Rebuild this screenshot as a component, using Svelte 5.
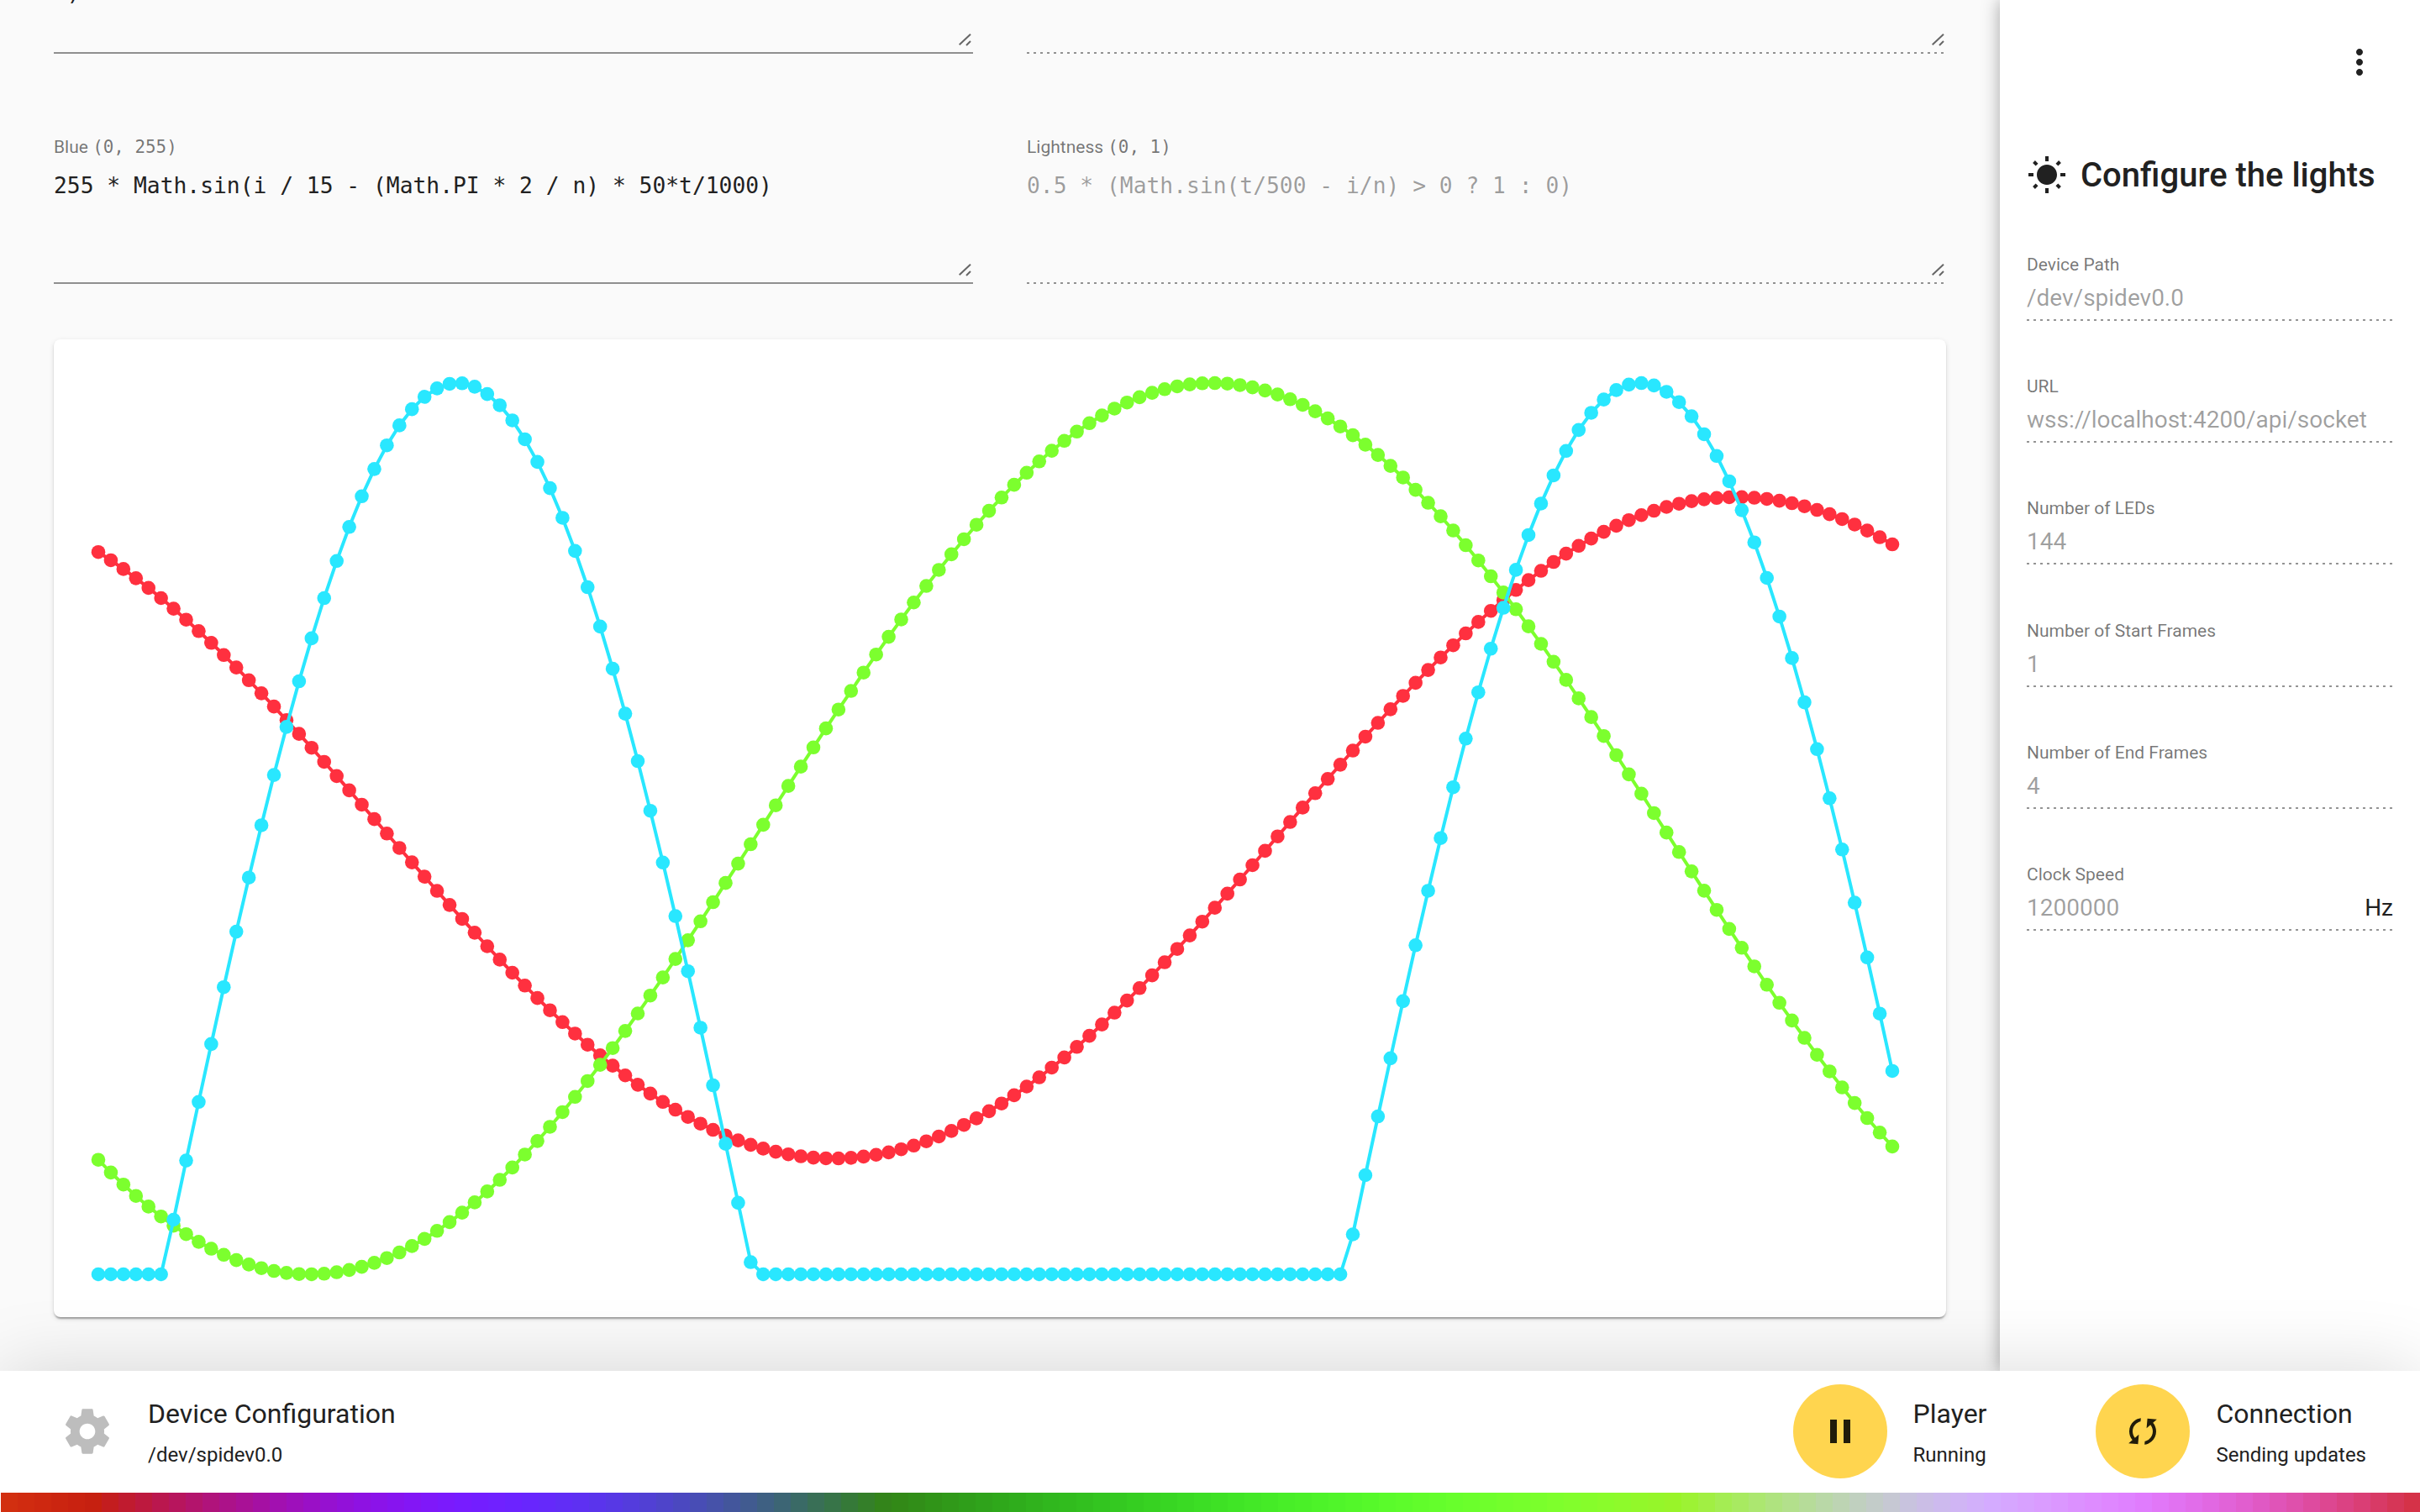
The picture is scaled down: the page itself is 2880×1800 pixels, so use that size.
<script lang="ts">
  const n = 144;
  const tau = Math.PI * 2;

  const red = (i: number) => 0.501 + 0.371 * Math.cos((tau * (i - 130.6)) / n);
  const green = (i: number) => 0.5 + 0.5 * Math.cos((tau * (i - 88.8)) / n);
  const blue = (i: number) => Math.max(0, Math.sin(i / 15 - 0.3387));

  const leds = Array.from({ length: n }, (_, i) => i);

  // chart area inside the card
  const xOf = (i: number) => 53 + i * 14.93;
  const yOf = (v: number) => 1113 - v * 1061;

  const series = [
    { color: "#ff303f", fn: red },
    { color: "#7cff2e", fn: green },
    { color: "#29e7ff", fn: blue },
  ].map((s) => ({
    color: s.color,
    pts: leds.map((i) => ({ x: xOf(i), y: yOf(s.fn(i)) })),
  }));

  const polyline = (pts: { x: number; y: number }[]) =>
    pts.map((p) => `${p.x.toFixed(1)},${p.y.toFixed(1)}`).join(" ");

  // the strip never goes fully dark, it sits on a small floor and washes out when bright
  const channel = (v: number) => Math.round(16 + v * 240);
  const ledColor = (i: number) => {
    const wash = 28 * green(i) ** 2;
    return `rgb(${channel(red(i))}, ${channel(green(i))}, ${Math.min(255, Math.round(channel(blue(i)) + wash))})`;
  };

  const formulas = [
    { label: "Red", range: "(0, 255)", value: "255 * Math.max(\n0)", disabled: false },
    { label: "Green", range: "(0, 255)", value: "", disabled: true },
    {
      label: "Blue",
      range: "(0, 255)",
      value: "255 * Math.sin(i / 15 - (Math.PI * 2 / n) * 50*t/1000)",
      disabled: false,
    },
    {
      label: "Lightness",
      range: "(0, 1)",
      value: "0.5 * (Math.sin(t/500 - i/n) > 0 ? 1 : 0)",
      disabled: true,
    },
  ];

  const fields = [
    { label: "Device Path", value: "/dev/spidev0.0" },
    { label: "URL", value: "wss://localhost:4200/api/socket" },
    { label: "Number of LEDs", value: "144" },
    { label: "Number of Start Frames", value: "1" },
    { label: "Number of End Frames", value: "4" },
    { label: "Clock Speed", value: "1200000", suffix: "Hz" },
  ];
</script>

<div class="app">
  <div class="upper">
    <main class="main">
      <div class="content">
        <div class="formulas">
          {#each formulas as f}
            <div class="formula">
              <span class="formula-label">{f.label} <code>{f.range}</code></span>
              <div class="formula-box" class:formula-box--off={f.disabled}>
                <textarea value={f.value} disabled={f.disabled} readonly spellcheck="false"></textarea>
                <svg class="grip" width="18" height="24" viewBox="0 0 18 24">
                  <path d="M1.7 15.3 15 2.7M10 16l5-5" stroke="#666" stroke-width="2" fill="none" />
                </svg>
              </div>
            </div>
          {/each}
        </div>

        <section class="card">
          <svg class="chart" width="2252" height="1164" viewBox="0 0 2252 1164">
            {#each series as s}
              <polyline points={polyline(s.pts)} fill="none" stroke={s.color} stroke-width="4" />
              {#each s.pts as p}
                <circle cx={p.x} cy={p.y} r="8.3" fill={s.color} />
              {/each}
            {/each}
          </svg>
        </section>
      </div>
    </main>

    <aside class="side">
      <div class="side-top">
        <svg class="icon" viewBox="0 0 24 24">
          <path d="M12 8c1.1 0 2-.9 2-2s-.9-2-2-2-2 .9-2 2 .9 2 2 2zm0 2c-1.1 0-2 .9-2 2s.9 2 2 2 2-.9 2-2-.9-2-2-2zm0 6c-1.1 0-2 .9-2 2s.9 2 2 2 2-.9 2-2-.9-2-2-2z" />
        </svg>
      </div>
      <h2 class="side-title">
        <svg class="icon" viewBox="0 0 24 24">
          <path d="M6.76 4.84l-1.8-1.79-1.41 1.41 1.79 1.79 1.42-1.41zM4 10.5H1v2h3v-2zm9-9.95h-2V3.5h2V.55zm7.45 3.91l-1.41-1.41-1.79 1.79 1.41 1.41 1.79-1.79zm-3.21 13.7l1.79 1.8 1.41-1.41-1.8-1.79-1.4 1.4zM20 10.5v2h3v-2h-3zm-8-5c-3.31 0-6 2.69-6 6s2.69 6 6 6 6-2.69 6-6-2.69-6-6-6zm-1 16.95h2V19.5h-2v2.95zm-7.45-3.91l1.41 1.41 1.79-1.8-1.41-1.41-1.79 1.8z" />
        </svg>
        <span>Configure the lights</span>
      </h2>
      <div class="fields">
        {#each fields as f}
          <label class="field">
            <span class="field-label">{f.label}</span>
            <span class="field-row">
              <input value={f.value} disabled />
              {#if f.suffix}<span class="field-suffix">{f.suffix}</span>{/if}
            </span>
          </label>
        {/each}
      </div>
    </aside>
  </div>

  <footer class="bottom">
    <div class="status status--device">
      <svg class="gear" viewBox="0 0 24 24">
        <path d="M19.43 12.98c.04-.32.07-.64.07-.98s-.03-.66-.07-.98l2.11-1.65c.19-.15.24-.42.12-.64l-2-3.46c-.12-.22-.39-.3-.61-.22l-2.49 1c-.52-.4-1.08-.73-1.69-.98l-.38-2.65C14.46 2.18 14.25 2 14 2h-4c-.25 0-.46.18-.49.42l-.38 2.65c-.61.25-1.17.59-1.69.98l-2.49-1c-.23-.09-.49 0-.61.22l-2 3.46c-.13.22-.07.49.12.64l2.11 1.65c-.04.32-.07.65-.07.98s.03.66.07.98l-2.11 1.65c-.19.15-.24.42-.12.64l2 3.46c.12.22.39.3.61.22l2.49-1c.52.4 1.08.73 1.69.98l.38 2.65c.03.24.24.42.49.42h4c.25 0 .46-.18.49-.42l.38-2.65c.61-.25 1.17-.59 1.69-.98l2.49 1c.23.09.49 0 .61-.22l2-3.46c.12-.22.07-.49-.12-.64l-2.11-1.65zM12 15.5c-1.93 0-3.5-1.57-3.5-3.5s1.57-3.5 3.5-3.5 3.5 1.57 3.5 3.5-1.57 3.5-3.5 3.5z" />
      </svg>
      <div class="status-text">
        <span class="status-title">Device Configuration</span>
        <span class="status-sub">/dev/spidev0.0</span>
      </div>
    </div>

    <div class="status">
      <button class="fab" aria-label="Pause">
        <svg class="icon" viewBox="0 0 24 24"><path d="M6 19h4V5H6v14zm8-14v14h4V5h-4z" /></svg>
      </button>
      <div class="status-text">
        <span class="status-title">Player</span>
        <span class="status-sub">Running</span>
      </div>
    </div>

    <div class="status">
      <button class="fab" aria-label="Connection">
        <svg class="icon sync" viewBox="0 0 24 24">
          <path d="M12 4V1L8 5l4 4V6c3.31 0 6 2.69 6 6 0 1.01-.25 1.97-.7 2.8l1.46 1.46C19.54 15.03 20 13.57 20 12c0-4.42-3.58-8-8-8zm0 14c-3.31 0-6-2.69-6-6 0-1.01.25-1.97.7-2.8L5.24 7.74C4.46 8.97 4 10.43 4 12c0 4.42 3.58 8 8 8v3l4-4-4-4v3z" />
        </svg>
      </button>
      <div class="status-text">
        <span class="status-title">Connection</span>
        <span class="status-sub">Sending updates</span>
      </div>
    </div>
  </footer>

  <div class="strip">
    {#each leds as i}
      <span class="led" style="background: {ledColor(i)}"></span>
    {/each}
  </div>
</div>

<style>
  :global(body) {
    margin: 0;
    background: #fafafa;
    font-family: Roboto, "Liberation Sans", sans-serif;
    color: #212121;
  }

  .app {
    display: flex;
    flex-direction: column;
    width: 2880px;
    height: 1800px;
    overflow: hidden;
  }

  .upper {
    display: flex;
    flex: 1;
    min-height: 0;
  }

  .main {
    flex: 1;
    min-width: 0;
    overflow: hidden;
    padding: 0 64px;
  }

  /* the page is scrolled a little: the first row is cut off at the top */
  .content {
    margin-top: -113px;
  }

  .formulas {
    display: grid;
    grid-template-columns: 1fr 1fr;
    column-gap: 64px;
    row-gap: 97px;
  }

  .formula {
    display: flex;
    flex-direction: column;
  }

  .formula-label {
    height: 28px;
    font-size: 21px;
    line-height: 28px;
    color: rgba(0, 0, 0, 0.54);
  }

  .formula-label code {
    font-family: "DejaVu Sans Mono", monospace;
    font-size: 20.9px;
  }

  .formula-box {
    position: relative;
    margin-top: 9px;
    border-bottom: 2px solid #8f8f8f;
  }

  .formula-box--off {
    border-bottom: 0;
    padding-bottom: 2px;
    background: linear-gradient(to right, rgba(0, 0, 0, 0.42) 0, rgba(0, 0, 0, 0.42) 33%, transparent 0) left bottom / 8px 2px repeat-x;
  }

  textarea {
    display: block;
    box-sizing: border-box;
    width: 100%;
    height: 138px;
    margin: 0;
    padding: 1px 0 0;
    border: 0;
    outline: 0;
    resize: none;
    overflow: hidden;
    background: transparent;
    font-family: "DejaVu Sans Mono", monospace;
    font-size: 26.3px;
    line-height: 44px;
    color: #212121;
  }

  textarea:disabled {
    color: rgba(0, 0, 0, 0.38);
  }

  .grip {
    position: absolute;
    right: 0;
    bottom: 0;
  }

  .formula-box--off .grip {
    bottom: 2px;
  }

  .card {
    margin-top: 66px;
    height: 1164px;
    background: #fff;
    border-radius: 8px;
    box-shadow: 0 4px 2px -2px rgba(0, 0, 0, 0.2), 0 2px 2px 0 rgba(0, 0, 0, 0.14), 0 2px 6px 0 rgba(0, 0, 0, 0.12);
  }

  .chart {
    display: block;
  }

  .side {
    display: flex;
    flex-direction: column;
    flex: none;
    box-sizing: border-box;
    width: 500px;
    padding: 50px 32px 0;
    background: #fff;
    box-shadow: 0 0 20px rgba(0, 0, 0, 0.35);
    z-index: 1;
  }

  .icon {
    display: block;
    flex: none;
    width: 48px;
    height: 48px;
    fill: currentColor;
  }

  .side-top {
    display: flex;
    justify-content: flex-end;
    margin-right: 16px;
  }

  .side-title {
    display: flex;
    align-items: center;
    gap: 16px;
    margin: 86px 0 0;
    font-size: 40px;
    font-weight: 500;
    line-height: 48px;
  }

  .side-title span {
    padding-top: 1px;
  }

  .fields {
    display: flex;
    flex-direction: column;
    gap: 63.2px;
    margin-top: 67px;
  }

  .field {
    display: flex;
    flex-direction: column;
    height: 82px;
    box-sizing: border-box;
    padding-bottom: 2px;
    background: linear-gradient(to right, rgba(0, 0, 0, 0.42) 0, rgba(0, 0, 0, 0.42) 33%, transparent 0) left bottom / 8px 2px repeat-x;
  }

  .field-label {
    font-size: 21px;
    line-height: 30px;
    color: rgba(0, 0, 0, 0.54);
  }

  .field-row {
    display: flex;
    align-items: center;
    margin-top: 9px;
    height: 32px;
  }

  input {
    flex: 1;
    min-width: 0;
    padding: 0;
    border: 0;
    outline: 0;
    background: transparent;
    font-family: Roboto, sans-serif;
    font-size: 28px;
    line-height: 32px;
    color: rgba(0, 0, 0, 0.38);
  }

  .field-suffix {
    font-size: 28px;
    color: #212121;
  }

  .bottom {
    display: flex;
    align-items: center;
    gap: 130px;
    flex: none;
    box-sizing: border-box;
    height: 145px;
    padding: 0 64px 1px 72px;
    background: #fff;
    box-shadow: 0 0 90px rgba(0, 0, 0, 0.15);
    z-index: 2;
  }

  .status {
    display: flex;
    align-items: center;
    gap: 31px;
  }

  .status--device {
    gap: 40px;
    margin-right: auto;
  }

  .gear {
    display: block;
    width: 64px;
    height: 64px;
    fill: #bdbdbd;
  }

  .status-text {
    display: flex;
    flex-direction: column;
    gap: 7px;
  }

  .status-title {
    font-size: 32px;
    line-height: 48px;
  }

  .status-sub {
    font-size: 24px;
    line-height: 36px;
  }

  .fab {
    display: flex;
    align-items: center;
    justify-content: center;
    width: 112px;
    height: 112px;
    padding: 0;
    border: 0;
    border-radius: 50%;
    background: #ffd54f;
    color: rgba(0, 0, 0, 0.87);
  }

  .sync {
    transform: rotate(-130deg);
  }

  .strip {
    display: flex;
    flex: none;
    height: 23px;
    padding-left: 1px;
    background: #fff;
    z-index: 3;
  }

  .led {
    flex: 1;
  }
</style>
